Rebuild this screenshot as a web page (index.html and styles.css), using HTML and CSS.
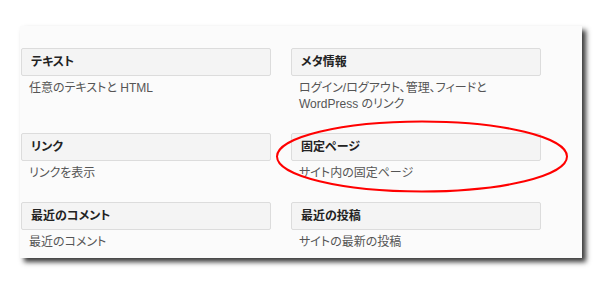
FILE: index.html
```html
<!DOCTYPE html>
<html>
  <head>
    <meta charset="UTF-8" />
    <title>ウィジェット</title>
    <link rel="stylesheet" href="styles.css">
  </head>
  <body>
    <div class="widgets">
      <div class="widget">
        <div class="widget-title">テキスト</div>
        <div class="widget-desc">任意のテキストと HTML</div>
      </div>
      <div class="widget">
        <div class="widget-title">メタ情報</div>
        <div class="widget-desc">ログイン/ログアウト、管理、フィードと<br />WordPress のリンク</div>
      </div>
      <div class="widget">
        <div class="widget-title">リンク</div>
        <div class="widget-desc">リンクを表示</div>
      </div>
      <div class="widget">
        <div class="widget-title">固定ページ</div>
        <div class="widget-desc">サイト内の固定ページ</div>
      </div>
      <div class="widget">
        <div class="widget-title">最近のコメント</div>
        <div class="widget-desc">最近のコメント</div>
      </div>
      <div class="widget">
        <div class="widget-title">最近の投稿</div>
        <div class="widget-desc">サイトの最新の投稿</div>
      </div>
    </div>
    <svg class="highlight" width="600" height="300" viewBox="0 0 600 300">
      <ellipse cx="422" cy="156.5" rx="145" ry="35" fill="none" stroke="#f00" stroke-width="2" />
    </svg>
  </body>
</html>
```

FILE: styles.css
```css
html,
body {
  margin: 0;
  padding: 0;
  background: #fff;
}

body {
  position: relative;
  width: 600px;
  height: 300px;
  overflow: hidden;
  font-family: 'Liberation Sans', 'Noto Sans CJK JP', sans-serif;
  font-feature-settings: 'palt';
}

.widgets {
  display: grid;
  grid-template-columns: 250px 250px;
  column-gap: 20px;
  align-items: start;
  width: 520px;
  height: 210px;
  margin: 26px 0 0 20px;
  padding: 22px 41px 0 1px;
  background: #fbfbfb;
  box-shadow: 4px 4px 5px #3a3a3a;
}

.widget {
  margin-bottom: 21px;
}

.widget-title {
  box-sizing: border-box;
  height: 28px;
  padding: 0 9px;
  border: 1px solid #dcdcdc;
  border-radius: 2px;
  font-size: 12px;
  font-weight: bold;
  line-height: 26px;
  color: #222;
  background: #f4f4f4;
}

.widget-desc {
  margin-top: 4px;
  padding-left: 8px;
  font-size: 12px;
  line-height: 16px;
  color: #555;
}

.highlight {
  position: absolute;
  top: 0;
  left: 0;
}
```
